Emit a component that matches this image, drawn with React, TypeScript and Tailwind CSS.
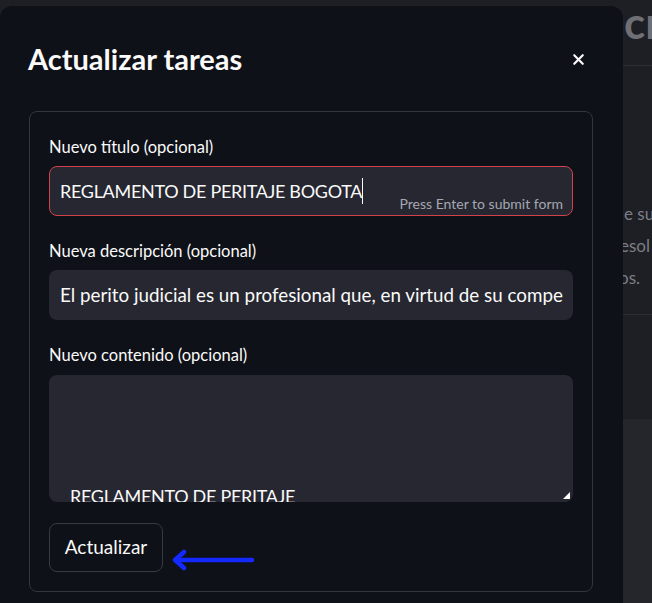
import { X } from 'lucide-react'

const field = 'w-[524px] rounded-[8px] bg-[#262730] text-[#fafafa]'

function Label({ children }: { children: string }) {
  return <p className="text-[16.5px] leading-[20px] text-[#fafafa]">{children}</p>
}

export default function App() {
  return (
    <div className="w-[652px] h-[603px] overflow-hidden bg-[#1e1f24] flex font-['Lato',sans-serif]">
      <div className="w-[623px] shrink-0 mt-[6px] bg-[#0e1117] rounded-t-[12px] pt-[35px] pl-[29px]">
        <div className="flex items-center justify-between pr-[36px]">
          <h2 className="-ml-[1px] text-[29px] leading-[36px] font-bold text-[#fafafa]">Actualizar tareas</h2>
          <X size={17} strokeWidth={3} className="text-[#fafafa]" />
        </div>

        <form className="mt-[34px] w-[564px] border border-[#34363d] rounded-[8px] pt-[25px] pl-[19px] pb-[19px] flex flex-col">
          <Label>Nuevo título (opcional)</Label>
          <div className={`${field} relative mt-[9px] h-[50px] border border-[#d2424a] flex items-center pl-[10px]`}>
            <span className="text-[18px] leading-[24px] tracking-[-0.3px]">REGLAMENTO DE PERITAJE BOGOTA</span>
            <span className="w-[1px] h-[26px] bg-[#fafafa]" />
            <span className="absolute right-[9px] bottom-[3px] text-[14px] leading-[16px] text-[#a5a8b3]">
              Press Enter to submit form
            </span>
          </div>

          <div className="mt-[25px]">
            <Label>Nueva descripción (opcional)</Label>
          </div>
          <div className={`${field} mt-[9px] h-[50px] flex items-center pl-[11px] pr-[10px] overflow-hidden`}>
            <span className="text-[18.8px] leading-[24px] whitespace-nowrap overflow-hidden">
              El perito judicial es un profesional que, en virtud de su competencia técnica
            </span>
          </div>

          <div className="mt-[25px]">
            <Label>Nuevo contenido (opcional)</Label>
          </div>
          <div className={`${field} relative mt-[10px] h-[127px] overflow-hidden pl-[21px] pt-[109px]`}>
            <p className="text-[18px] leading-[24px] tracking-[-0.3px] whitespace-nowrap">REGLAMENTO DE PERITAJE</p>
            <svg className="absolute right-[3px] bottom-[3px]" width="7" height="7" viewBox="0 0 7 7">
              <path d="M7 0 L7 7 L0 7 Z" fill="#ffffff" />
            </svg>
          </div>

          <div className="mt-[21px] flex items-center">
            <button
              type="button"
              className="w-[114px] h-[49px] rounded-[8px] border border-[#383a41] bg-[#0e1117] text-[19px] text-[#fafafa]"
            >
              Actualizar
            </button>
            <svg className="ml-[9px] mt-[24px]" width="84" height="22" viewBox="0 0 84 22">
              <path d="M80 11 H6 M12 3 L3 11 L12 19" fill="none" stroke="#1329ff" strokeWidth="4.5" strokeLinecap="round" strokeLinejoin="round" />
            </svg>
          </div>
        </form>
      </div>

      <div className="flex-1 flex flex-col overflow-hidden">
        <div className="h-[66px] border-b border-[#2d2e34] overflow-hidden whitespace-nowrap">
          <span className="block mt-[-2px] ml-[1px] text-[44px] leading-[48px] font-bold text-[#6f7075]">cr</span>
        </div>
        <div className="h-[249px] border-b border-[#2d2e34] pt-[132px] text-[17px] leading-[32px] text-[#7c7e85] whitespace-nowrap overflow-hidden">
          <p className="ml-[1px]">e su</p>
          <p className="-ml-[3px]">esol</p>
          <p className="-ml-[4px]">os.</p>
        </div>
        <div className="h-[104px]" />
        <div className="flex-1 bg-[#25262c]" />
      </div>
    </div>
  )
}
